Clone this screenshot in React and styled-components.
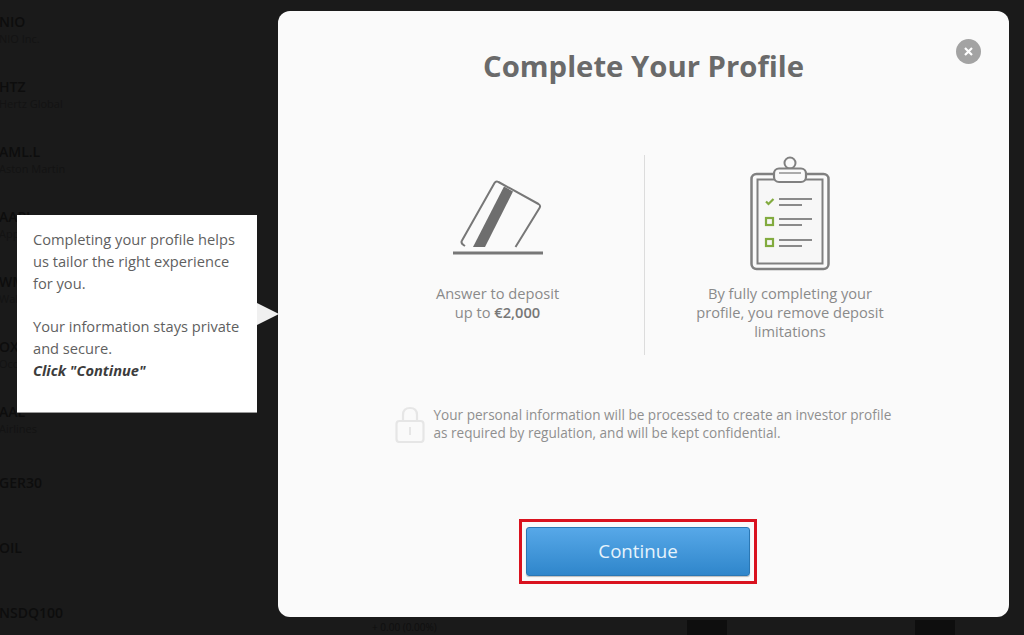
import React from 'react';
import styled, { createGlobalStyle } from 'styled-components';

const Global = createGlobalStyle`
  html, body { margin: 0; padding: 0; height: 100%; background: #1a1a1a; }
  body { font-family: "Open Sans", "Liberation Sans", sans-serif; overflow: hidden; }
`;

const Page = styled.div`
  position: relative;
  width: 1024px;
  height: 635px;
  overflow: hidden;
  background: #1a1a1a;
`;

const InstrumentList = styled.ul`
  list-style: none;
  margin: 0;
  padding: 13px 0 0;
  width: 120px;
  display: flex;
  flex-direction: column;
`;

const Instrument = styled.li`
  height: ${p => p.$h || 65}px;
  margin-left: -1px;
  display: flex;
  flex-direction: column;
`;

const Ticker = styled.span`
  font-size: 14px;
  line-height: 18px;
  font-weight: 600;
  color: #0d0d0d;
  white-space: nowrap;
`;

const Company = styled.span`
  font-size: 11px;
  line-height: 15px;
  color: #131313;
  white-space: nowrap;
`;

const FooterBar = styled.div`
  position: absolute;
  left: 278px;
  right: 15px;
  bottom: 0;
  height: 17px;
  display: flex;
  align-items: flex-end;
`;

const FooterText = styled.span`
  margin: 0 0 1px 94px;
  width: 315px;
  font-size: 10px;
  line-height: 14px;
  color: #0f0f0f;
`;

const FooterTab = styled.span`
  width: 40px;
  height: 15px;
  background: #0e0e0e;
  margin-right: ${p => p.$gap}px;
`;

const Modal = styled.section`
  position: absolute;
  left: 278px;
  top: 11px;
  width: 731px;
  height: 606px;
  box-sizing: border-box;
  background: #fafafa;
  border-radius: 12px;
  display: flex;
  flex-direction: column;
  align-items: center;
`;

const Title = styled.h1`
  margin: 33px 0 0;
  font-size: 29.3px;
  line-height: 44px;
  font-weight: 700;
  color: #6a6a6a;
`;

const CloseButton = styled.button`
  position: absolute;
  top: 28px;
  right: 28px;
  width: 25px;
  height: 25px;
  padding: 0;
  border: none;
  border-radius: 50%;
  background: #a3a3a3;
  display: flex;
  align-items: center;
  justify-content: center;
`;

const Columns = styled.div`
  margin-top: 67px;
  width: 585px;
  height: 200px;
  display: flex;
`;

const Column = styled.div`
  width: 293px;
  box-sizing: border-box;
  display: flex;
  flex-direction: column;
  align-items: center;
  padding: ${p => p.$top}px ${p => p.$side}px 0;
  & + & { border-left: 1px solid #dcdcdc; width: 291px; }
`;

const Caption = styled.p`
  margin: ${p => p.$gap}px 0 0;
  font-size: 14.65px;
  line-height: 19px;
  color: #8a8a8a;
  text-align: center;
`;

const Strong = styled.strong`
  font-weight: 600;
  color: #777;
`;

const Notice = styled.div`
  margin-top: 50px;
  width: 506px;
  margin-left: 8px;
  display: flex;
  align-items: center;
  gap: 8px;
`;

const NoticeText = styled.p`
  margin: 0;
  font-size: 13.58px;
  line-height: 18.5px;
  color: #8f8f8f;
  white-space: nowrap;
`;

const Highlight = styled.div`
  position: absolute;
  left: 241px;
  top: 508px;
  width: 238px;
  height: 65px;
  box-sizing: border-box;
  border: 3px solid #d9121f;
  display: flex;
  align-items: center;
  justify-content: center;
`;

const Primary = styled.button`
  width: 224px;
  height: 49px;
  padding: 0 0 2px;
  border: 1px solid #2a77b4;
  border-radius: 3px;
  background: linear-gradient(#57a8e8, #2f86cb);
  box-shadow: 0 1px 1px rgba(0, 0, 0, 0.25);
  color: #e6f3fc;
  font-family: inherit;
  font-size: 18.7px;
  font-weight: 400;
`;

const Tip = styled.aside`
  position: absolute;
  left: 17px;
  top: 215px;
  width: 240px;
  height: 197px;
  box-sizing: border-box;
  padding: 14px 10px 0 16px;
  background: #fff;
  box-shadow: 0 1px 0 #999;
`;

const TipText = styled.p`
  margin: 0 0 ${p => p.$after || 0}px;
  font-size: 14.65px;
  line-height: 21.8px;
  color: #5f5f5f;
  white-space: nowrap;
`;

const TipCall = styled.em`
  font-weight: 700;
  font-style: italic;
  color: #3c3c3c;
`;

const TipArrow = styled.span`
  position: absolute;
  left: 240px;
  top: 88px;
  width: 0;
  height: 0;
  border-style: solid;
  border-width: 11px 0 11px 22px;
  border-color: transparent transparent transparent #f0f0f0;
`;

const CardIcon = () => (
  <svg width="96" height="78" viewBox="0 0 96 78" fill="none">
    <path d="M15 68 L13.500 67 Q10.500 65 12 62.500 L44.500 5 Q46 2.500 48.500 4 L88.500 26 Q91 27.500 89.500 30 L65.500 69" stroke="#777" strokeWidth="2" strokeLinejoin="round" />
    <path d="M23 69 L54 8.500 L63 13.500 L35 69 Z" fill="#6e6e6e" />
    <path d="M3 75 H93" stroke="#777" strokeWidth="3" />
  </svg>
);

const ClipboardIcon = () => (
  <svg width="80" height="116" viewBox="0 0 80 116" fill="none">
    <circle cx="40" cy="8" r="5.500" stroke="#808080" strokeWidth="2" />
    <rect x="1.500" y="19" width="77" height="95" rx="5" stroke="#808080" strokeWidth="2.500" />
    <rect x="7.500" y="24.500" width="65" height="84" stroke="#808080" strokeWidth="2" fill="#f7f7f7" />
    <rect x="24" y="13.500" width="32" height="13.500" rx="5" fill="#fafafa" stroke="#808080" strokeWidth="2.200" />
    <path d="M29 18 H51" stroke="#909090" strokeWidth="1.500" />
    <path d="M16 46.500 L18.500 49 L23.500 44" stroke="#82ab3f" strokeWidth="2.200" />
    <path d="M29 44 H62 M29 50 H52 M29 64 H62 M29 70 H52 M29 85 H62 M29 91 H52" stroke="#8a8a8a" strokeWidth="1.800" />
    <rect x="16" y="63" width="7" height="7" stroke="#82ab3f" strokeWidth="2.200" />
    <rect x="16" y="84" width="7" height="7" stroke="#82ab3f" strokeWidth="2.200" />
  </svg>
);

const LockGlyph = styled.svg`
  flex-shrink: 0;
`;

const LockIcon = () => (
  <LockGlyph width="31" height="38" viewBox="0 0 31 38" fill="none">
    <path d="M8 16 V10 Q8 3 15 3 Q22 3 22 10 V16" stroke="#e6e6e6" strokeWidth="2.200" />
    <rect x="1.500" y="16" width="27" height="21" rx="3" stroke="#e6e6e6" strokeWidth="2.200" />
    <rect x="14" y="22" width="2" height="8" fill="#e6e6e6" />
  </LockGlyph>
);

const instruments = [
  { t: 'NIO', c: 'NIO Inc.' },
  { t: 'HTZ', c: 'Hertz Global' },
  { t: 'AML.L', c: 'Aston Martin' },
  { t: 'AAPL', c: 'Apple' },
  { t: 'WMT', c: 'Walmart' },
  { t: 'OXY', c: 'Occidental' },
  { t: 'AAL', c: 'Airlines', h: 71 },
  { t: 'GER30', h: 65 },
  { t: 'OIL', h: 65 },
  { t: 'NSDQ100' },
];

export default function App() {
  return (
    <Page>
      <Global />
      <InstrumentList>
        {instruments.map(i => (
          <Instrument key={i.t} $h={i.h}>
            <Ticker>{i.t}</Ticker>
            {i.c && <Company>{i.c}</Company>}
          </Instrument>
        ))}
      </InstrumentList>

      <FooterBar>
        <FooterText>+ 0.00 (0.00%)</FooterText>
        <FooterTab $gap={188} />
        <FooterTab $gap={0} />
      </FooterBar>

      <Modal>
        <Title>Complete Your Profile</Title>
        <CloseButton aria-label="Close">
          <svg width="9" height="9" viewBox="0 0 9 9">
            <path d="M1 1 L8 8 M8 1 L1 8" stroke="#fff" strokeWidth="2.200" />
          </svg>
        </CloseButton>
        <Columns>
          <Column $top={23} $side={20}>
            <CardIcon />
            <Caption $gap={28}>Answer to deposit<br />up to <Strong>€2,000</Strong></Caption>
          </Column>
          <Column $top={0} $side={30}>
            <ClipboardIcon />
            <Caption $gap={13}>By fully completing your<br />profile, you remove deposit<br />limitations</Caption>
          </Column>
        </Columns>
        <Notice>
          <LockIcon />
          <NoticeText>
            Your personal information will be processed to create an investor profile<br />
            as required by regulation, and will be kept confidential.
          </NoticeText>
        </Notice>
        <Highlight>
          <Primary>Continue</Primary>
        </Highlight>
      </Modal>

      <Tip>
        <TipText $after={21.800}>Completing your profile helps<br />us tailor the right experience<br />for you.</TipText>
        <TipText>Your information stays private<br />and secure.<br /><TipCall>Click "Continue"</TipCall></TipText>
        <TipArrow />
      </Tip>
    </Page>
  );
}
